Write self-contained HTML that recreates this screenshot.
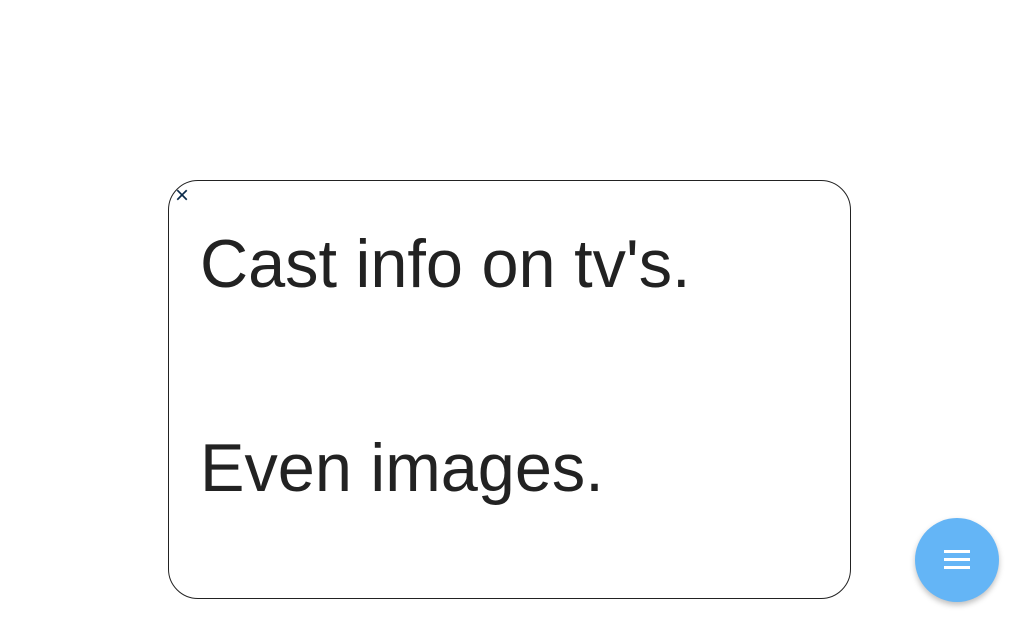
<!DOCTYPE html>
<html><head><style>
body{margin:0;width:1014px;height:621px;background:#fff;position:relative;overflow:hidden;font-family:"Liberation Sans",sans-serif}
.box{position:absolute;left:168px;top:180px;width:681px;height:417px;border:1px solid #222;border-radius:30px}
.x{position:absolute;left:175px;top:184px;font-size:24px;color:#0a2a4a;line-height:1}
.t{position:absolute;left:200px;font-size:68px;color:#222;line-height:1;white-space:nowrap;transform:scaleX(0.98);transform-origin:left}
.fab{position:absolute;left:915px;top:518px;width:84px;height:84px;border-radius:50%;background:#64b5f6;box-shadow:0 3px 6px rgba(0,0,0,.25)}
.fab i{position:absolute;left:29px;width:26px;height:3px;background:#fff}
</style></head><body>
<div class="box"></div>
<div class="x">×</div>
<div class="t" style="top:230px">Cast info on tv's.</div>
<div class="t" style="top:434px">Even images.</div>
<div class="fab"><i style="top:32px"></i><i style="top:40px"></i><i style="top:48px"></i></div>
</body></html>
